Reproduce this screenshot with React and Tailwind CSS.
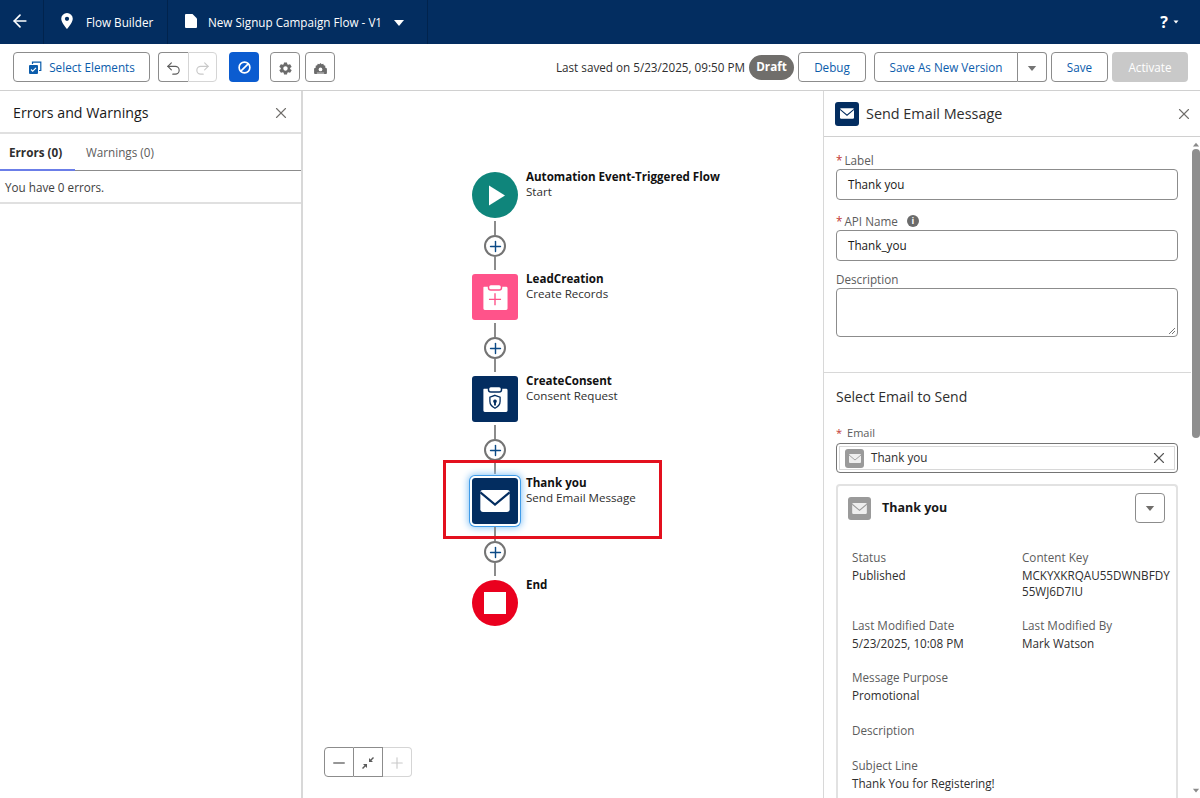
import React from "react";
import { ArrowLeft, Undo2, Redo2, X, Minus, Plus } from "lucide-react";
import { IoMdSettings } from "react-icons/io";

const Caret = ({ className }) => (
  <svg viewBox="0 0 12 8" className={className} fill="currentColor">
    <path d="M1 1h10L6 7z" />
  </svg>
);

const Mail = ({ className }) => (
  <svg viewBox="0 0 24 18" className={className}>
    <path d="M2 0h20a2 2 0 0 1 2 2v14a2 2 0 0 1-2 2H2a2 2 0 0 1-2-2V2a2 2 0 0 1 2-2z" fill="currentColor" />
    <path d="M0 2l12 10L24 2" fill="none" stroke="var(--flap)" strokeWidth="1.8" />
  </svg>
);

const Connector = () => (
  <div className="w-[46px] h-[56px] flex flex-col items-center pt-[3px]">
    <div className="w-[2px] h-[14px] bg-[#8c8c8c]" />
    <div className="w-[22px] h-[22px] shrink-0 rounded-full border-2 border-[#747474] bg-white flex items-center justify-center text-[#0b4a86]">
      <Plus size={17} strokeWidth={2} />
    </div>
    <div className="w-[2px] h-[13px] bg-[#8c8c8c]" />
  </div>
);

const FlowNode = ({ title, sub, children, shape, selected }) => (
  <div className="flex items-start h-[46px] gap-2">
    <div
      className={`w-[46px] h-[46px] shrink-0 flex items-center justify-center ${shape} ${
        selected ? "outline-2 outline-white shadow-[0_0_0_3px_#3f9be8,0_0_7px_4px_#8cc6f5]" : ""
      }`}
    >
      {children}
    </div>
    <div className="text-[11.6px] leading-[15px] text-[#2e2e2e] -mt-[3px]">
      <div className="font-bold text-[#111]">{title}</div>
      {sub && <div>{sub}</div>}
    </div>
  </div>
);

const Clipboard = ({ fill, children }) => (
  <svg viewBox="0 0 28 30" className="w-[26px] h-[28px]">
    <path d="M2 4h24a1.5 1.5 0 0 1 1.500 1.500v22a1.500 1.500 0 0 1-1.500 1.500H3a1.500 1.500 0 0 1-1.500-1.500v-22A1.500 1.500 0 0 1 2 4z" fill="white" />
    <rect x="7" y="1.500" width="14" height="6" rx="2.500" fill="white" stroke={fill} strokeWidth="1.600" />
    {children}
  </svg>
);

const Detail = ({ label, value, tight }) => (
  <div className={tight ? "pb-px" : ""}>
    <div className="text-[11.7px] leading-[17px] text-[#5c5c5c]">{label}</div>
    {value && (
      <div className={`text-[11.7px] text-[#2e2e2e] break-all mt-px ${tight ? "leading-[16px]" : "leading-[17px]"}`}>{value}</div>
    )}
  </div>
);

const ToolButton = ({ children, className = "" }) => (
  <button className={`h-[30px] pt-[2px] rounded-[4px] border border-[#8c8c8c] bg-white flex items-center justify-center ${className}`}>
    {children}
  </button>
);

const Field = ({ label, required, value, info }) => (
  <div>
    <div className="text-[11.7px] leading-[16px] text-[#5c5c5c] flex items-center">
      {required && <span className="text-[#c23934] mr-[2px]">*</span>}
      {label}
      {info && (
        <span className="ml-[9px] w-[12px] h-[12px] rounded-full bg-[#6b6b6b] text-white text-[9px] leading-[12px] font-bold text-center">i</span>
      )}
    </div>
    <div className="mt-[1px] h-[31px] rounded-[4px] border border-[#8c8c8c] px-[11px] flex items-center text-[11.7px] text-[#181818]">
      {value}
    </div>
  </div>
);

export default function App() {
  return (
    <div className="w-[1200px] h-[798px] overflow-hidden bg-white flex flex-col font-['Open_Sans',sans-serif] text-[#181818]">
      {/* top bar */}
      <header className="h-[44px] shrink-0 bg-[#032d60] text-white flex items-stretch text-[11.7px]">
        <div className="w-[44px] border-r border-[#01234d] flex items-center justify-center">
          <ArrowLeft size={20} strokeWidth={2} className="-ml-[3px] -mt-[2px]" />
        </div>
        <div className="w-[124px] border-r border-[#01234d] flex items-center pl-4 pt-px gap-[12px]">
          <svg viewBox="0 0 14 18" className="w-[14px] h-[16px] -mt-[3px]">
            <path fillRule="evenodd" fill="white" d="M7 0a6.500 6.500 0 0 1 6.500 6.500C13.500 11 7 18 7 18S.5 11 .5 6.500A6.500 6.500 0 0 1 7 0zm0 4.200a2.400 2.400 0 1 0 0 4.800 2.400 2.400 0 0 0 0-4.800z" />
          </svg>
          <span>Flow Builder</span>
        </div>
        <div className="w-[260px] border-r border-[#01234d] flex items-center pl-[17px] pt-px">
          <svg viewBox="0 0 12 14" className="w-[12px] h-[14px] -mt-[4px]" fill="white">
            <path d="M1 0h6.500L12 4.500V13a1 1 0 0 1-1 1H1a1 1 0 0 1-1-1V1a1 1 0 0 1 1-1z" />
          </svg>
          <span className="ml-[11px]">New Signup Campaign Flow - V1</span>
          <Caret className="w-[12px] h-[8px] ml-[11px]" />
        </div>
        <div className="flex-1 flex items-center justify-end pr-[21px] gap-[5px]">
          <span className="text-[16px] font-bold">?</span>
          <Caret className="w-[6px] h-[4px]" />
        </div>
      </header>

      {/* toolbar */}
      <div className="h-[47px] shrink-0 border-b border-[#d0d0d0] flex items-center pl-[13px] pr-[12px] text-[11.7px]">
        <ToolButton className="w-[137px] gap-[7px] text-[#0b5cab]">
          <svg viewBox="0 0 14 14" className="w-[14px] h-[14px]">
            <path d="M4.500 3V1.200h8.300v8.300H11" fill="none" stroke="#0b5cab" strokeWidth="1.200" />
            <rect x="1" y="4" width="9" height="9" rx="1" fill="#0b5cab" />
            <path d="M3 8.500l1.700 1.700L8 6.800" fill="none" stroke="white" strokeWidth="1.100" />
          </svg>
          Select Elements
        </ToolButton>
        <div className="ml-2 flex">
          <ToolButton className="w-[30px] rounded-r-none border-r-0 text-[#5c5c5c]">
            <Undo2 size={17} strokeWidth={1.6} />
          </ToolButton>
          <ToolButton className="w-[29px] rounded-l-none border-[#d5d5d5] text-[#c9c9c9]">
            <Redo2 size={17} strokeWidth={1.6} />
          </ToolButton>
        </div>
        <button className="ml-3 w-[30px] h-[30px] pt-px rounded-[4px] bg-[#0b5cd0] flex items-center justify-center">
          <svg viewBox="0 0 14 14" className="w-[13px] h-[13px]" fill="none" stroke="white" strokeWidth="1.800">
            <circle cx="7" cy="7" r="5.800" />
            <path d="M3 11l8-8" />
          </svg>
        </button>
        <ToolButton className="ml-[11px] w-[30px] text-[#6b6b6b]">
          <IoMdSettings size={15} />
        </ToolButton>
        <ToolButton className="ml-[5px] w-[30px]">
          <svg viewBox="0 0 14 12" className="w-[13px] h-[11px]" fill="#6b6b6b">
            <path d="M7 0l1.300 1.300 1.700-.5.600 1.700 1.700.5-.2 1.800L14 6v5a1 1 0 0 1-1 1H1a1 1 0 0 1-1-1V6l1.900-1.200-.2-1.800 1.700-.5.600-1.700 1.700.5z" />
            <circle cx="7" cy="7" r="2" fill="white" />
            <path d="M3 11h8" stroke="white" strokeWidth=".8" />
          </svg>
        </ToolButton>
        <span className="ml-auto pt-[2px] text-[#2e2e2e]">Last saved on 5/23/2025, 09:50 PM</span>
        <span className="ml-1 w-[45px] h-[25px] rounded-full bg-[#706e6b] text-white font-bold flex items-center justify-center">Draft</span>
        <ToolButton className="ml-1 w-[68px] text-[#0b5cab]">Debug</ToolButton>
        <div className="ml-2 flex">
          <ToolButton className="w-[144px] rounded-r-none text-[#0b5cab]">Save As New Version</ToolButton>
          <ToolButton className="w-[29px] rounded-l-none border-l-0 text-[#747474]">
            <Caret className="w-[10px] h-[7px]" />
          </ToolButton>
        </div>
        <ToolButton className="ml-1 w-[57px] text-[#0b5cab]">Save</ToolButton>
        <button className="ml-1 w-[76px] h-[30px] pt-[2px] rounded-[4px] bg-[#c9c9c9] text-white">Activate</button>
      </div>

      <div className="flex-1 flex min-h-0">
        {/* errors panel */}
        <aside className="w-[303px] shrink-0 border-r-2 border-[#d8d8d8]">
          <div className="h-[43px] border-b-2 border-[#e0e0e0] flex items-center justify-between pl-[13px] pr-[11px] pt-[2px]">
            <span className="text-[14.2px]">Errors and Warnings</span>
            <X size={18} strokeWidth={1.500} className="text-[#706e6b]" />
          </div>
          <div className="h-[37px] border-b border-[#8c8c8c] flex text-[11.7px]">
            <div className="w-[75px] pl-[9px] pt-[2px] flex items-center font-bold text-[#2e2e2e] border-b-2 border-[#6b7ee8] h-[37px]">Errors (0)</div>
            <div className="pl-[11px] pt-[2px] flex items-center text-[#5c5c5c]">Warnings (0)</div>
          </div>
          <div className="h-[33px] border-b-2 border-[#e0e0e0] pl-[5px] pt-[2px] flex items-center text-[11.7px] text-[#3e3e3e]">You have 0 errors.</div>
        </aside>

        {/* canvas */}
        <main className="flex-1 relative pl-[169px] pt-[81px]">
          <FlowNode title="Automation Event-Triggered Flow" sub="Start" shape="rounded-full bg-[#0f857b]">
            <svg viewBox="0 0 16 20" className="w-[16px] h-[21px] ml-[3px]"><path d="M0 0l16 10L0 20z" fill="white" /></svg>
          </FlowNode>
          <Connector />
          <FlowNode title="LeadCreation" sub="Create Records" shape="rounded-[3px] bg-[#ff538a]">
            <Clipboard fill="#ff538a">
              <path d="M14 11v13M7.500 17.500h13" stroke="#ff538a" strokeWidth="1.500" />
            </Clipboard>
          </FlowNode>
          <Connector />
          <FlowNode title="CreateConsent" sub="Consent Request" shape="rounded-[3px] bg-[#032d60]">
            <Clipboard fill="#032d60">
              <path d="M14 11l5.500 2v4.500c0 3.500-2.500 6-5.500 7.500-3-1.500-5.500-4-5.500-7.500V13z" fill="none" stroke="#032d60" strokeWidth="1.400" />
              <path d="M14 15.500a2 2 0 0 1 1 3.700V22h-2v-2.800a2 2 0 0 1 1-3.700z" fill="#032d60" />
            </Clipboard>
          </FlowNode>
          <Connector />
          <FlowNode title="Thank you" sub="Send Email Message" shape="rounded-[3px] bg-[#032d60] [--flap:#032d60]" selected>
            <Mail className="w-[30px] h-[22px] text-white" />
          </FlowNode>
          <Connector />
          <FlowNode title="End" shape="rounded-full bg-[#ea001e]">
            <div className="w-[22px] h-[22px] bg-white" />
          </FlowNode>

          {/* red highlight drawn over the screenshot */}
          <div className="absolute left-[140px] top-[369px] w-[219px] h-[79px] border-[3px] border-[#e3101e] pointer-events-none" />

          <div className="absolute left-[21px] top-[656px] flex h-[30px]">
            <ToolButton className="w-[30px] rounded-r-none text-[#747474]"><Minus size={18} strokeWidth={1.800} /></ToolButton>
            <ToolButton className="w-[29px] rounded-none border-l-0 text-[#5c5c5c]">
              <svg viewBox="0 0 14 14" className="w-[14px] h-[14px]" fill="currentColor">
                <path d="M8 2v4h4L10.500 4.500 13 2l-1-1-2.500 2.500zM6 12V8H2l1.500 1.500L1 12l1 1 2.500-2.500z" />
              </svg>
            </ToolButton>
            <ToolButton className="w-[29px] rounded-l-none border-l-0 border-[#d5d5d5] text-[#c9c9c9]"><Plus size={18} strokeWidth={1.500} /></ToolButton>
          </div>
        </main>

        {/* properties panel */}
        <aside className="w-[377px] shrink-0 border-l border-[#d8d8d8] flex flex-col min-h-0">
          <div className="h-[46px] shrink-0 border-b border-[#d0d0d0] flex items-center pl-[11px] pr-[7px]">
            <div className="w-[24px] h-[24px] rounded-[3px] bg-[#032d60] flex items-center justify-center [--flap:#032d60]">
              <Mail className="w-[14px] h-[11px] text-white" />
            </div>
            <span className="ml-[7px] text-[14.4px] text-[#2e2e2e]">Send Email Message</span>
            <X size={18} strokeWidth={1.500} className="ml-auto text-[#706e6b]" />
          </div>

          <div className="flex-1 flex min-h-0">
            <div className="w-[367px] overflow-hidden">
              <div className="pl-3 pr-[13px] pt-[15px] h-[236px] border-b border-[#d8d8d8] flex flex-col">
                <Field label="Label" required value="Thank you" />
                <div className="mt-[13px]">
                  <Field label="API Name" required info value="Thank_you" />
                </div>
                <div className="mt-[10px]">
                  <div className="text-[11.7px] leading-[16px] text-[#5c5c5c]">Description</div>
                  <div className="mt-[1px] h-[49px] rounded-[4px] border border-[#8c8c8c] relative">
                    <svg viewBox="0 0 8 8" className="absolute right-[1px] bottom-[1px] w-[8px] h-[8px]" stroke="#777" fill="none">
                      <path d="M1 7l6-6M4 7l3-3" />
                    </svg>
                  </div>
                </div>
              </div>

              <div className="pl-3 pr-[13px] pt-[14px]">
                <div className="text-[14px] leading-[20px] text-[#2e2e2e]">Select Email to Send</div>
                <div className="mt-[19px] text-[11px] leading-[14px] text-[#5c5c5c]">
                  <span className="text-[#c23934] mr-[5px]">*</span>Email
                </div>
                <div className="mt-[3px] h-[30px] rounded-[4px] border border-[#747474] p-[2px]">
                  <div className="h-full border border-[#d8d8d8] flex items-center pl-[5px] pr-[6px] text-[11.7px] text-[#2e2e2e]">
                    <div className="w-[19px] h-[19px] rounded-[3px] bg-[#9a9a9a] flex items-center justify-center [--flap:#9a9a9a]">
                      <Mail className="w-[12px] h-[9px] text-[#eee]" />
                    </div>
                    <span className="ml-[7px]">Thank you</span>
                    <X size={18} strokeWidth={1.500} className="ml-auto text-[#555]" />
                  </div>
                </div>

                <div className="mt-[11px] rounded-t-[4px] border-2 border-b-0 border-[#e2e2e2] pl-[10px] pt-[7px] h-[400px]">
                  <div className="flex items-center pr-[11px]">
                    <div className="w-[23px] h-[23px] rounded-[3px] bg-[#9a9a9a] flex items-center justify-center [--flap:#9a9a9a]">
                      <Mail className="w-[15px] h-[11px] text-[#eee]" />
                    </div>
                    <span className="ml-[11px] text-[12.5px] font-bold">Thank you</span>
                    <button className="ml-auto w-[30px] h-[30px] rounded-[4px] border border-[#8c8c8c] flex items-center justify-center text-[#706e6b]">
                      <Caret className="w-[10px] h-[7px]" />
                    </button>
                  </div>
                  <div className="mt-[26px] pl-[4px] grid grid-cols-[170px_152px] gap-y-[17px] items-start">
                    <Detail label="Status" value="Published" />
                    <Detail label="Content Key" value="MCKYXKRQAU55DWNBFDY55WJ6D7IU" tight />
                    <Detail label="Last Modified Date" value="5/23/2025, 10:08 PM" />
                    <Detail label="Last Modified By" value="Mark Watson" />
                    <div className="col-span-2 pb-px"><Detail label="Message Purpose" value="Promotional" /></div>
                    <div className="col-span-2 pb-px"><Detail label="Description" /></div>
                    <div className="col-span-2"><Detail label="Subject Line" value="Thank You for Registering!" /></div>
                  </div>
                </div>
              </div>
            </div>

            {/* scrollbar */}
            <div className="w-[9px] shrink-0 flex flex-col items-center relative">
              <Caret className="w-[8px] h-[5px] rotate-180 mt-[5px] text-[#8a8a8a]" />
              <div className="mt-[2px] w-[8px] h-[289px] rounded-full bg-[#8e8e8e]" />
              <Caret className="w-[8px] h-[5px] mt-auto mb-[5px] text-[#8a8a8a]" />
            </div>
          </div>
        </aside>
      </div>
    </div>
  );
}
